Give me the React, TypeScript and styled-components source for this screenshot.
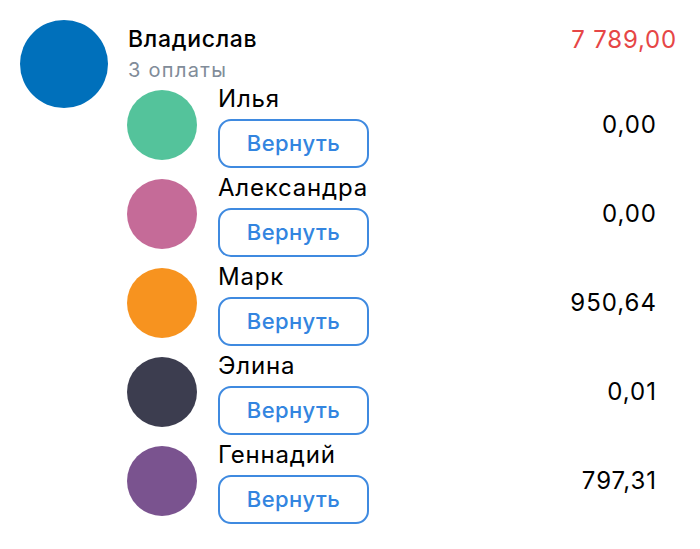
import React from "react";
import styled, { createGlobalStyle } from "styled-components";

const GlobalStyle = createGlobalStyle`
  html, body {
    margin: 0;
    padding: 0;
    background: #ffffff;
  }
  body {
    font-family: Inter, "Noto Sans", "Liberation Sans", sans-serif;
    color: #000000;
  }
`;

const Page = styled.div`
  display: grid;
  grid-template-columns: 88px 1fr;
  grid-template-rows: 60px auto;
  column-gap: 20px;
  padding: 20px 23px 0 20px;
`;

const Avatar = styled.div<{ $size: number; $color: string }>`
  width: ${(p) => p.$size}px;
  height: ${(p) => p.$size}px;
  border-radius: 50%;
  background: ${(p) => p.$color};
  flex-shrink: 0;
`;

const MainAvatar = styled(Avatar)`
  grid-row: 1 / 3;
  grid-column: 1;
  align-self: start;
`;

const Header = styled.div`
  grid-column: 2;
  grid-row: 1;
  display: flex;
  justify-content: space-between;
  align-items: flex-start;
  padding-top: 5px;
`;

const HeaderText = styled.div`
  display: flex;
  flex-direction: column;
`;

const Title = styled.div`
  font-size: 23px;
  font-weight: 500;
  line-height: 28px;
  letter-spacing: 0.7px;
`;

const Subtitle = styled.div`
  margin-top: 5px;
  font-size: 20px;
  line-height: 24px;
  letter-spacing: 1.3px;
  color: #818c99;
`;

const Amount = styled.div<{ $negative?: boolean }>`
  font-size: 24px;
  line-height: 30px;
  letter-spacing: ${(p) => (p.$negative ? 0.8 : 1)}px;
  color: ${(p) => (p.$negative ? "#e64646" : "#000000")};
  white-space: nowrap;
`;

const ChildList = styled.div`
  grid-column: 2;
  grid-row: 2;
  margin-left: -1px;
  padding-right: 20px;
  display: flex;
  flex-direction: column;
`;

const ChildRow = styled.div`
  height: 89px;
  display: flex;
  align-items: center;
  gap: 21px;
`;

const ChildInfo = styled.div`
  display: flex;
  flex-direction: column;
  flex: 1;
`;

const ChildName = styled.div`
  font-size: 24px;
  line-height: 36px;
  letter-spacing: 0.8px;
  margin-top: -1px;
`;

const ReturnButton = styled.button`
  width: 151px;
  height: 49px;
  margin-top: 2px;
  border: 2px solid #3f8ae0;
  border-radius: 13px;
  background: #ffffff;
  color: #3385e0;
  font-family: inherit;
  font-size: 22px;
  font-weight: 500;
  letter-spacing: 0.4px;
  padding: 0;
  cursor: pointer;
`;

type Payment = { name: string; color: string; amount: string };

const payments: Payment[] = [
  { name: "Илья", color: "#54c39b", amount: "0,00" },
  { name: "Александра", color: "#c56b98", amount: "0,00" },
  { name: "Марк", color: "#f7931f", amount: "950,64" },
  { name: "Элина", color: "#3c3d4f", amount: "0,01" },
  { name: "Геннадий", color: "#7a538f", amount: "797,31" },
];

const App = () => (
  <>
    <GlobalStyle />
    <Page>
      <MainAvatar $size={88} $color="#0070bb" />
      <Header>
        <HeaderText>
          <Title>Владислав</Title>
          <Subtitle>3 оплаты</Subtitle>
        </HeaderText>
        <Amount $negative>7 789,00</Amount>
      </Header>
      <ChildList>
        {payments.map((p) => (
          <ChildRow key={p.name}>
            <Avatar $size={70} $color={p.color} />
            <ChildInfo>
              <ChildName>{p.name}</ChildName>
              <ReturnButton>Вернуть</ReturnButton>
            </ChildInfo>
            <Amount>{p.amount}</Amount>
          </ChildRow>
        ))}
      </ChildList>
    </Page>
  </>
);

export default App;
